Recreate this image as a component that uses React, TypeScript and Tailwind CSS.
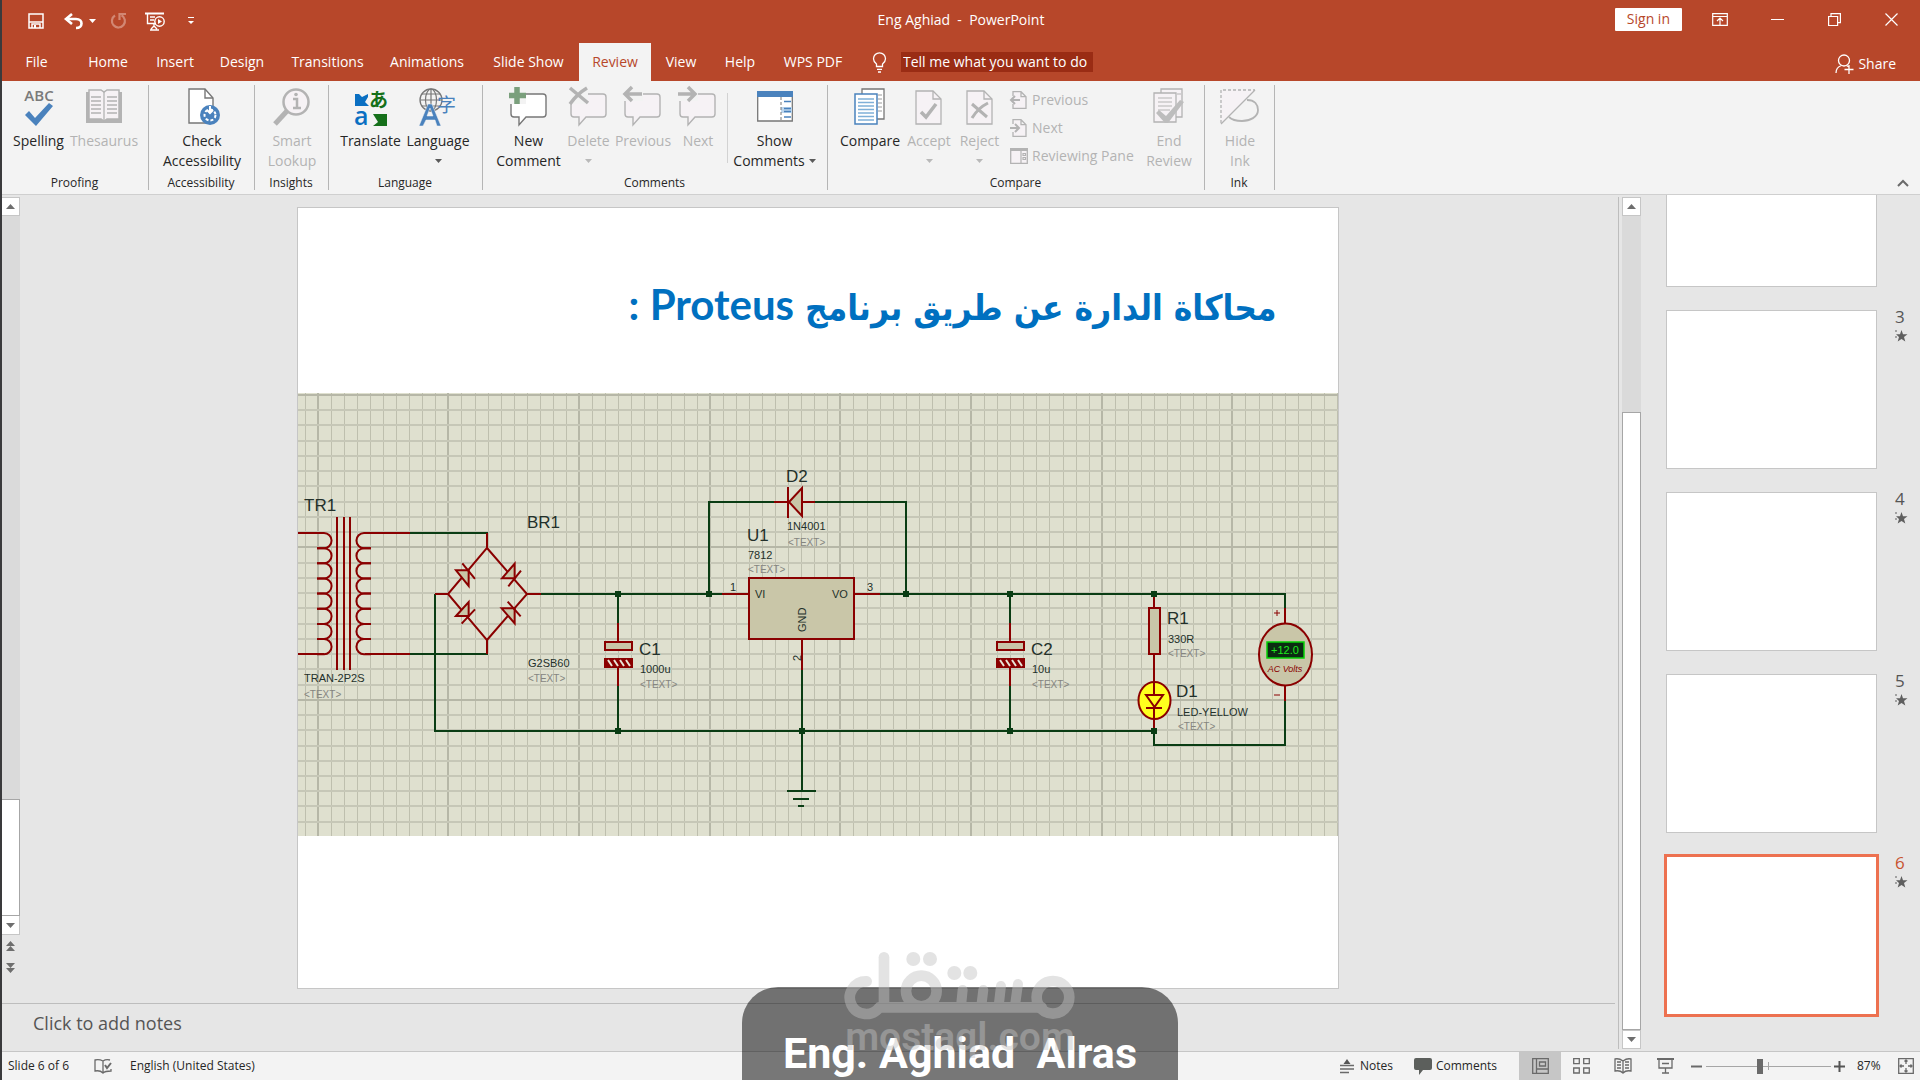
import React from "react";

/* ---------- shared bits ---------- */

type P = { children?: React.ReactNode };

function Svg({ w, h, label, children }: P & { w: number; h: number; label?: string }) {
  return (
    <svg width={w} height={h} viewBox={`0 0 ${w} ${h}`} fill="none" aria-hidden={!label} aria-label={label} className="shrink-0 overflow-visible">
      {children}
    </svg>
  );
}

function Caret({ dim }: { dim?: boolean }) {
  return (
    <Svg w={7} h={4}>
      <path d="M0 0h7L3.5 4z" fill={dim ? "#b9b9b9" : "#5a5a5a"} />
    </Svg>
  );
}

/* ---------- title bar ---------- */

function TitleBar() {
  return (
    <div className="grid h-[43px] grid-cols-3 items-start pt-[3px] text-sm text-white">
      <div className="flex h-9 items-center pl-[26px]">
        <button aria-label="Save" className="mr-[20px]">
          <Svg w={16} h={16}>
            <path d="M1 1h14v14H1z" stroke="#fff" strokeWidth="1.5" />
            <path d="M1 9h14" stroke="#fff" strokeWidth="1.5" />
            <path d="M4 15v-4h8v4" stroke="#fff" strokeWidth="1.5" />
            <path d="M6 12h2v3H6z" fill="#fff" />
          </Svg>
        </button>
        <button aria-label="Undo" className="mr-[5px]">
          <Svg w={20} h={16}>
            <path d="M8 1 2 6l6 5" stroke="#fff" strokeWidth="2.6" />
            <path d="M2 6h10c4 0 5.500 2.500 5.500 4.500S16 15 12 15" stroke="#fff" strokeWidth="2.600" />
          </Svg>
        </button>
        <button aria-label="Undo options" className="mr-[13px]">
          <Svg w={7} h={4}>
            <path d="M0 0h7L3.500 4z" fill="#fff" />
          </Svg>
        </button>
        <button aria-label="Repeat" className="mr-[18px]">
          <Svg w={18} h={18}>
            <path d="M6 3.500A6.500 6.500 0 1 0 12.500 3.300" stroke="#d28773" strokeWidth="2.200" />
            <path d="M10.500 8V2H17" stroke="#d28773" strokeWidth="2.200" />
          </Svg>
        </button>
        <button aria-label="Start from beginning" className="mr-[23px]">
          <Svg w={20} h={19}>
            <path d="M0 1.500h19" stroke="#fff" strokeWidth="2" />
            <path d="M2.500 2v9.500H11M5 5h5M5 8h4M9 12v3M5 18h9M6 17l3-3 3 3" stroke="#fff" strokeWidth="1.400" />
            <circle cx="14.500" cy="9.500" r="4.700" stroke="#fff" strokeWidth="1.400" />
            <path d="M13 7l4 2.500-4 2.500z" fill="#fff" />
          </Svg>
        </button>
        <button aria-label="Customize Quick Access Toolbar">
          <Svg w={7} h={8}>
            <path d="M0 .5h6" stroke="#fff" />
            <path d="M0 4h6L3 7z" fill="#fff" />
          </Svg>
        </button>
      </div>
      <h1 className="flex h-[34px] items-center justify-center whitespace-pre">{"Eng Aghiad  -  PowerPoint"}</h1>
      <div className="flex h-8 items-center justify-end pr-[22px]">
        <button className="mr-[30px] h-[23px] rounded-[1px] bg-white px-[12px] leading-5 text-[#b7472a]">Sign in</button>
        <button aria-label="Ribbon display options" className="mr-[43px]">
          <Svg w={16} h={13}>
            <path d="M.7.700h14.600v11.600H.7zM.7 3.500h14.600M8 12V5.500M5 8l3-3 3 3" stroke="#fff" strokeWidth="1.200" />
          </Svg>
        </button>
        <button aria-label="Minimize" className="mr-[44px]">
          <Svg w={13} h={13}>
            <path d="M0 6.500h13" stroke="#fff" />
          </Svg>
        </button>
        <button aria-label="Restore" className="mr-[44px]">
          <Svg w={13} h={13}>
            <path d="M.6 3.500h9v9h-9zM3 3.500V.600h9.400v9H10" stroke="#fff" strokeWidth="1.200" />
          </Svg>
        </button>
        <button aria-label="Close">
          <Svg w={13} h={13}>
            <path d="M.5.500l12 12M12.500.500l-12 12" stroke="#fff" strokeWidth="1.200" />
          </Svg>
        </button>
      </div>
    </div>
  );
}

const TABS: { name: string; width: string }[] = [
  { name: "File", width: "w-[69px]" },
  { name: "Home", width: "w-[74px]" },
  { name: "Insert", width: "w-[60px]" },
  { name: "Design", width: "w-[74px]" },
  { name: "Transitions", width: "w-[97px]" },
  { name: "Animations", width: "w-[102px]" },
  { name: "Slide Show", width: "w-[101px]" },
  { name: "Review", width: "w-[72px]" },
  { name: "View", width: "w-[60px]" },
  { name: "Help", width: "w-[58px]" },
  { name: "WPS PDF", width: "w-[88px]" },
];

function TabStrip() {
  return (
    <nav className="flex h-[38px] items-stretch text-sm text-white">
      {TABS.map((t) => (
        <button
          key={t.name}
          className={`${t.width} shrink-0 whitespace-nowrap text-center ${t.name === "Review" ? "bg-[#f3f3f3] text-[#b7472a]" : ""}`}
        >
          {t.name}
        </button>
      ))}
      <label className="ml-[15px] flex items-center gap-[14px]">
        <Svg w={15} h={21} label="Tell me">
          <path d="M4.500 14.500v-2.500C2.500 10.500 1.500 9 1.500 6.800a6 6 0 0 1 12 0c0 2.200-1 3.700-3 5.200v2.500zM5 17.300h5M6 20h3" stroke="#fff" strokeWidth="1.300" />
        </Svg>
        <input
          placeholder="Tell me what you want to do"
          className="h-5 w-[192px] bg-[#9a2c14] pl-[2px] text-sm text-white placeholder-white outline-none placeholder:opacity-100"
        />
      </label>
      <button className="ml-auto flex items-center gap-1 pr-[24px] pt-[3px]">
        <Svg w={19} h={20}>
          <circle cx="9" cy="6.500" r="5.500" stroke="#fff" strokeWidth="1.300" />
          <path d="M1 19c0-4 2-6.500 5.500-7.500M11.500 11.500l2 1.200M14 11v9M9.500 15.500h9" stroke="#fff" strokeWidth="1.300" />
        </Svg>
        Share
      </button>
    </nav>
  );
}

/* ---------- ribbon icons ---------- */

const G = "#b3b3b3";
const PALE = "#f6f2f5";
const BUBBLE = "M7 7h27q3 0 3 3v17q0 3-3 3H17l-7 8v-8H5q-3 0-3-3V10q0-3 3-3z";

const icons = {
  spelling: (
    <Svg w={34} h={40}>
      <text x="17" y="14" textAnchor="middle" fontSize="15" fontWeight="600" fill="#7a7a7a" fontFamily="Open Sans, sans-serif">ABC</text>
      <path d="M3 28l4-4 6 7L27 16l4 3-17 20z" fill="#4a82bd" />
    </Svg>
  ),
  thesaurus: (
    <Svg w={38} h={36}>
      <path d="M1 3h36v31H1z" fill={G} />
      <path d="M4 1h12l3 2 3-2h12v29H22l-3 2-3-2H4z" fill={PALE} stroke={G} strokeWidth="1.500" />
      <path d="M19 3v28M6 8h10M6 12h10M6 16h10M6 20h10M6 24h10M22 8h10M22 12h10M22 16h10M22 20h10M22 24h10" stroke={G} strokeWidth="1.300" />
    </Svg>
  ),
  check: (
    <Svg w={26} h={38}>
      <path d="M0 1h16l8 9v25H0z" fill="#fff" stroke="#777" strokeWidth="1.400" />
      <path d="M16 1v9h8" stroke="#777" strokeWidth="1.400" />
      <circle cx="21" cy="27" r="10" fill="#4a82bd" />
      <circle cx="21" cy="27" r="5.500" stroke="#fff" strokeWidth="2" strokeDasharray="3 2" />
      <path d="M21 18v7M18 22l3 3 3-3" stroke="#fff" strokeWidth="2" />
    </Svg>
  ),
  lookup: (
    <Svg w={38} h={38}>
      <path d="M2 36l12-13" stroke={G} strokeWidth="5" />
      <circle cx="23" cy="14" r="12.500" fill={PALE} stroke={G} strokeWidth="2.500" />
      <path d="M20 11h4v9M20 20h8" stroke={G} strokeWidth="2.500" />
      <circle cx="23" cy="6.500" r="1.800" fill={G} />
    </Svg>
  ),
  translate: (
    <Svg w={36} h={38}>
      <path d="M2 6h4l3 3 6-3v3l-3 5 4 4H2z" fill="#0a6fc2" />
      <text x="1" y="37" fontSize="25" fill="#0a6fc2" fontFamily="Open Sans, sans-serif" fontWeight="600">a</text>
      <text x="16" y="19" fontSize="19" fill="#15701a" fontFamily="Noto Sans CJK JP, sans-serif" fontWeight="700">あ</text>
      <path d="M20 26h14v12H20l5-4z" fill="#15701a" />
    </Svg>
  ),
  language: (
    <Svg w={38} h={38}>
      <circle cx="12" cy="12" r="11" stroke="#777" strokeWidth="1.300" />
      <path d="M1 12h22M3 6h18M3 18h18M12 1v22" stroke="#777" strokeWidth="1.200" />
      <ellipse cx="12" cy="12" rx="5.500" ry="11" stroke="#777" strokeWidth="1.200" />
      <path d="M0 38 9 16h4l9 22h-4l-2-6H7l-3 6zM8 28h6l-3-8z" fill="#4a82bd" stroke="#f3f3f3" strokeWidth=".5" />
      <text x="18" y="24" fontSize="19" fill="#4a82bd" fontFamily="Noto Sans CJK SC, sans-serif">字</text>
    </Svg>
  ),
  newComment: (
    <Svg w={40} h={40}>
      <path d={BUBBLE} fill="#fff" stroke="#777" strokeWidth="1.400" />
      <path d="M-1 -1h18v18H-1z" fill="#f3f3f3" />
      <path d="M8 0v17M0 8.500h17" stroke="#7a9f7c" strokeWidth="5.500" />
    </Svg>
  ),
  deleteComment: (
    <Svg w={40} h={40}>
      <path d={BUBBLE} fill={PALE} stroke={G} strokeWidth="1.400" />
      <path d="M0 0h19v17H0z" fill="#f3f3f3" />
      <path d="M1 1l18 15M18 1Q8 7 1 17" stroke={G} strokeWidth="3.500" />
    </Svg>
  ),
  prevComment: (
    <Svg w={40} h={40}>
      <path d={BUBBLE} fill={PALE} stroke={G} strokeWidth="1.400" />
      <path d="M0 0h20v14H0z" fill="#f3f3f3" />
      <path d="M2 7h17M9 0L2 7l7 7" stroke={G} strokeWidth="3.500" />
    </Svg>
  ),
  nextComment: (
    <Svg w={40} h={40}>
      <path d={BUBBLE} fill={PALE} stroke={G} strokeWidth="1.400" />
      <path d="M0 0h20v14H0z" fill="#f3f3f3" />
      <path d="M0 7h17M10 0l7 7-7 7" stroke={G} strokeWidth="3.500" />
    </Svg>
  ),
  showComments: (
    <Svg w={36} h={36}>
      <path d="M.7 3h34.600v29H.7z" fill="#fff" stroke="#777" strokeWidth="1.300" />
      <path d="M0 2h36v6H0z" fill="#4a82bd" />
      <path d="M24 18h11v6H24z" fill="#bcd6ee" />
      <path d="M24 8v25" stroke="#777" strokeDasharray="3 2" />
      <path d="M27 12.500h7M27 19.500h7M27 22.500h7M27 28h7" stroke="#4a82bd" strokeWidth="1.300" />
    </Svg>
  ),
  compare: (
    <Svg w={32} h={38}>
      <path d="M8 1h22v30H8z" fill="#fff" stroke="#777" strokeWidth="1.300" />
      <path d="M24 7h4M24 11h4M24 15h4M24 19h4M24 23h4" stroke="#999" />
      <path d="M1 6h22v30H1z" fill="#fff" stroke="#4a82bd" strokeWidth="1.500" />
      <path d="M4 11h16M4 14.500h16M4 18h16M4 21.500h16M4 25h16M4 28.500h16M4 32h16" stroke="#7fb0d8" strokeWidth="1.300" />
    </Svg>
  ),
  accept: (
    <Svg w={28} h={36}>
      <path d="M1 2h17l8 8v25H1z" fill={PALE} stroke={G} strokeWidth="1.300" />
      <path d="M18 2v8h8" stroke={G} strokeWidth="1.300" />
      <path d="M6 23l5 5L21 15" stroke={G} strokeWidth="3.500" />
    </Svg>
  ),
  reject: (
    <Svg w={28} h={36}>
      <path d="M1 2h17l8 8v25H1z" fill={PALE} stroke={G} strokeWidth="1.300" />
      <path d="M18 2v8h8" stroke={G} strokeWidth="1.300" />
      <path d="M6 15l15 13M22 14Q12 19 6 29" stroke={G} strokeWidth="3" />
    </Svg>
  ),
  endReview: (
    <Svg w={32} h={38}>
      <path d="M8 1h21v28H8z" fill={PALE} stroke={G} strokeWidth="1.300" />
      <path d="M24 6h4" stroke={G} />
      <path d="M1 5h22v29H1z" fill={PALE} stroke={G} strokeWidth="1.300" />
      <path d="M5 10h14M5 14h14M5 18h14M5 22h12" stroke={G} strokeWidth="1.200" />
      <path d="M3 25l3-3 7 6L27 12l4 2-16 21h-3z" fill="#bdbdbd" />
    </Svg>
  ),
  hideInk: (
    <Svg w={40} h={36}>
      <path d="M1 1h34L1 34z" fill={PALE} />
      <path d="M1 34V1h34" stroke={G} strokeWidth="1.300" strokeDasharray="3 2" />
      <path d="M1 35 35 1" stroke={G} strokeWidth="1.300" />
      <path d="M27 11c8 0 11 5 11 10 0 7-8 11-16 11-7 0-11-2-13-4" stroke={G} strokeWidth="1.800" />
    </Svg>
  ),
};

/* ---------- ribbon ---------- */

function Big({ icon, lines, width, dim, drop }: { icon: React.ReactNode; lines: string[]; width: string; dim?: boolean; drop?: "below" | "inline" }) {
  return (
    <button className={`${width} flex shrink-0 flex-col items-center leading-5 ${dim ? "text-[#b3b3b3]" : "text-[#262626]"}`}>
      <span className="mb-1 flex h-10 items-center justify-center">{icon}</span>
      <span className="whitespace-nowrap">{lines[0]}</span>
      {lines[1] && (
        <span className="flex items-center gap-1 whitespace-nowrap">
          {lines[1]}
          {drop === "inline" && <Caret dim={dim} />}
        </span>
      )}
      {drop === "below" && (
        <span className="flex h-5 items-center">
          <Caret dim={dim} />
        </span>
      )}
    </button>
  );
}

function Group({ name, width, pad = "", children }: P & { name: string; width: string; pad?: string }) {
  return (
    <section aria-label={name} className={`${width} relative flex shrink-0 flex-col`}>
      <div className={`flex h-[93px] justify-center pt-[6px] ${pad}`}>{children}</div>
      <h2 className="pr-[2px] text-center text-xs leading-[22px]">{name}</h2>
      <span className="absolute right-0 top-1 h-[105px] w-px bg-[#b5b5b5]" />
    </section>
  );
}

function SmallRow({ icon, label }: { icon: React.ReactNode; label: string }) {
  return (
    <button className="flex h-7 items-center gap-1 whitespace-nowrap">
      {icon}
      {label}
    </button>
  );
}

function Ribbon() {
  return (
    <div className="flex h-[114px] shrink-0 border-b border-[#cfcfcf] bg-[#f3f3f3] text-sm text-[#262626]">
      <Group name="Proofing" width="w-[147px]" pad="pr-[8px]">
        <Big icon={icons.spelling} lines={["Spelling"]} width="w-[65px]" />
        <Big icon={icons.thesaurus} lines={["Thesaurus"]} width="w-[66px]" dim />
      </Group>
      <Group name="Accessibility" width="w-[106px]">
        <Big icon={icons.check} lines={["Check", "Accessibility"]} width="w-[90px]" />
      </Group>
      <Group name="Insights" width="w-[74px]">
        <Big icon={icons.lookup} lines={["Smart", "Lookup"]} width="w-[60px]" dim />
      </Group>
      <Group name="Language" width="w-[154px]" pad="pr-[2px]">
        <Big icon={icons.translate} lines={["Translate"]} width="w-[66px]" />
        <Big icon={icons.language} lines={["Language"]} width="w-[69px]" drop="below" />
      </Group>
      <Group name="Comments" width="w-[345px]" pad="pr-[5px]">
        <Big icon={icons.newComment} lines={["New", "Comment"]} width="w-[76px]" />
        <Big icon={icons.deleteComment} lines={["Delete"]} width="w-[44px]" dim drop="below" />
        <Big icon={icons.prevComment} lines={["Previous"]} width="w-[65px]" dim />
        <Big icon={icons.nextComment} lines={["Next"]} width="w-[45px]" dim />
        <span className="mx-[6px] mt-[6px] h-[70px] w-px bg-[#d2d2d2]" />
        <Big icon={icons.showComments} lines={["Show", "Comments"]} width="w-[82px]" drop="inline" />
      </Group>
      <Group name="Compare" width="w-[377px]" pad="pl-[2px]">
        <Big icon={icons.compare} lines={["Compare"]} width="w-[68px]" />
        <Big icon={icons.accept} lines={["Accept"]} width="w-[50px]" dim drop="below" />
        <Big icon={icons.reject} lines={["Reject"]} width="w-[51px]" dim drop="below" />
        <div className="-mt-px w-[134px] pl-[5px] text-[#b3b3b3]">
          <SmallRow
            label="Previous"
            icon={
              <Svg w={18} h={18}>
                <path d="M3 5V.700h8l5 5V17.300H3V13M11 .7v5h5" fill={PALE} stroke={G} strokeWidth="1.300" />
                <path d="M1 9h9M5 5L1 9l4 4" stroke={G} strokeWidth="2" />
              </Svg>
            }
          />
          <SmallRow
            label="Next"
            icon={
              <Svg w={18} h={18}>
                <path d="M3 5V.700h8l5 5V17.300H3V13M11 .7v5h5" fill={PALE} stroke={G} strokeWidth="1.300" />
                <path d="M0 9h9M5 5l4 4-4 4" stroke={G} strokeWidth="2" />
              </Svg>
            }
          />
          <SmallRow
            label="Reviewing Pane"
            icon={
              <Svg w={18} h={18}>
                <path d="M.7 1.700h16.600v14.600H.7z" fill={PALE} stroke={G} strokeWidth="1.300" />
                <path d="M0 1h18v3H0z" fill={G} />
                <path d="M11 4v12M13 6.500h2.500v2H13zM13 10.500h2.500v2H13z" stroke={G} strokeWidth="1.200" />
              </Svg>
            }
          />
        </div>
        <Big icon={icons.endReview} lines={["End", "Review"]} width="w-[60px]" dim />
      </Group>
      <Group name="Ink" width="w-[70px]">
        <Big icon={icons.hideInk} lines={["Hide", "Ink"]} width="w-[50px]" dim />
      </Group>
      <button aria-label="Collapse the ribbon" className="ml-auto mr-[11px] self-end pb-[7px]">
        <Svg w={12} h={8}>
          <path d="M1 7l5-5 5 5" stroke="#6a6a6a" strokeWidth="2" />
        </Svg>
      </button>
    </div>
  );
}

/* ---------- circuit drawing ---------- */

const RED = "#8a0000";
const WIRE = "#0a3d14";
const INK = "#23302a";
const FILL = "#c9c6a8";

function Note({ x, y, children }: P & { x: number; y: number }) {
  return <text x={x} y={y} fontSize="10" fill="#85857f">{children}</text>;
}
function Val({ x, y, children }: P & { x: number; y: number }) {
  return <text x={x} y={y} fontSize="11" fill={INK}>{children}</text>;
}
function Ref({ x, y, children }: P & { x: number; y: number }) {
  return <text x={x} y={y} fontSize="17" fill={INK}>{children}</text>;
}
function Node({ x, y }: { x: number; y: number }) {
  return <rect x={x - 3} y={y - 3} width="6" height="6" fill={WIRE} />;
}

function Capacitor({ x }: { x: number }) {
  return (
    <g>
      <path d={`M${x} 594V623M${x} 686V731`} stroke={WIRE} strokeWidth="2" />
      <path d={`M${x} 623V641M${x} 667V686`} stroke={RED} strokeWidth="2" />
      <rect x={x - 13} y="642" width="27" height="8" fill={FILL} stroke={RED} strokeWidth="2" />
      <rect x={x - 13} y="659" width="27" height="8" fill={RED} stroke={RED} strokeWidth="2" />
      <path d={`M${x - 10} 660l4 6M${x - 4} 660l4 6M${x + 2} 660l4 6M${x + 8} 660l4 6`} stroke="#e8e6d8" strokeWidth="2" />
      <Node x={x} y={594} />
      <Node x={x} y={731} />
    </g>
  );
}

function Circuit() {
  const vs: number[] = [];
  for (let i = -1; i < 79; i++) vs.push(i);
  const hs: number[] = [];
  for (let i = 0; i < 29; i++) hs.push(i);
  const coils = [0, 1, 2, 3, 4, 5, 6, 7];
  return (
    <svg viewBox="298 393 1040 443" className="block w-full shrink-0" fill="none" fontFamily="Liberation Sans, Arial, sans-serif" role="img" aria-label="Power supply circuit">
      <rect x="298" y="393" width="1040" height="443" fill="#dfe0cf" />
      {vs.map((i) => {
        const x = Math.round(317.7 + i * 13.067);
        const bold = i % 10 === 0;
        return <rect key={i} x={x - (bold ? 1 : 0)} y="393" width={bold ? 2 : 1} height="443" fill={bold ? "#b6b7a7" : "#bebfae"} />;
      })}
      {hs.map((i) => {
        const y = Math.round(395 + i * 15.24);
        const bold = i % 10 === 0;
        return <rect key={i} x="298" y={y - 1} width="1040" height="2" fill={bold ? "#b6b7a7" : "#c6c7b7"} />;
      })}

      {/* wires */}
      <g stroke={WIRE} strokeWidth="2">
        <path d="M409 533h79M409 654h79" />
        <path d="M435 594v137h719v14h131v-44" />
        <path d="M541 594h181M709 594v-92h65M815 502h91v92M880 594h405v14" />
        <path d="M802 669v122" />
        <path d="M787 791h29M793 799h16M798 806h6" />
      </g>

      {/* transformer */}
      <g stroke={RED} strokeWidth="2">
        <path d="M298 533h20M298 654h26M371 533h39M365 654h45M337 517v153M344 517v153M350 517v153" />
        {coils.map((i) => {
          const y = 533 + i * 15.15;
          return (
            <g key={i}>
              <path d={`M317 ${y}h7a7.500 7.500 0 0 1 0 15.150h-7`} />
              <path d={`M371 ${y}h-7a7.500 7.500 0 0 0 0 15.150h7`} />
            </g>
          );
        })}
      </g>

      {/* bridge rectifier */}
      <g stroke={RED} strokeWidth="2">
        <path d="M487 533v15l-39 46 39 46v14M487 548l40 46-40 46M435 594h13M527 594h14" />
      </g>
      <g transform="translate(290 450) scale(.3333)" stroke={RED} strokeWidth="6">
        <path d="M498 361h38v47zM636 385l38-44v44zM498 498l38-42v42zM635 475h39v45z" fill={FILL} />
        <path d="M517 340l38 47M655 409l38-47M515 521l40-43M653 455l39 44" />
      </g>

      <Capacitor x={618} />
      <Capacitor x={1010} />

      {/* diode D2 */}
      <g stroke={RED} strokeWidth="2">
        <path d="M774 502h14M802 502h13M788 487v31" />
        <path d="M802 488v28l-13-14z" fill={FILL} />
      </g>

      {/* regulator */}
      <g stroke={RED} strokeWidth="2">
        <path d="M722 594h27M854 594h26M802 639v31" />
        <rect x="749" y="578" width="105" height="61" fill={FILL} />
      </g>

      {/* resistor, LED */}
      <g stroke={RED} strokeWidth="2">
        <path d="M1154 597v11M1154 654v75" />
        <rect x="1149" y="608" width="11" height="46" fill={FILL} />
        <ellipse cx="1154.500" cy="700.500" rx="16" ry="18.500" fill="#ffff1e" />
        <path d="M1154 682v13M1154 708v12M1146 695h17l-8.500 12zM1146 708h16" />
      </g>
      <Node x={709} y={594} />
      <Node x={906} y={594} />
      <Node x={802} y={731} />
      <Node x={1154} y={594} />
      <Node x={1154} y={731} />

      {/* voltmeter */}
      <g stroke={RED} strokeWidth="2">
        <path d="M1285 608v15M1285 686v15" />
        <path d="M1274 613h6M1277 610v6M1274 695h6" strokeWidth="1" />
        <ellipse cx="1285.500" cy="654.500" rx="26.500" ry="31" fill={FILL} />
      </g>
      <rect x="1267" y="642" width="37" height="16" fill="#0b2c12" stroke="#06d406" strokeWidth="1.500" />
      <text x="1285" y="654" fontSize="11" fill="#1ee81e" textAnchor="middle">+12.0</text>
      <text x="1285" y="672" fontSize="9" fontStyle="italic" fill={RED} textAnchor="middle">AC Volts</text>

      {/* labels */}
      <Ref x={304} y={511}>TR1</Ref>
      <Val x={304} y={682}>TRAN-2P2S</Val>
      <Note x={304} y={698}>{"<TEXT>"}</Note>
      <Ref x={527} y={528}>BR1</Ref>
      <Val x={528} y={667}>G2SB60</Val>
      <Note x={528} y={682}>{"<TEXT>"}</Note>
      <Ref x={639} y={655}>C1</Ref>
      <Val x={640} y={673}>1000u</Val>
      <Note x={640} y={688}>{"<TEXT>"}</Note>
      <Ref x={786} y={482}>D2</Ref>
      <Val x={787} y={530}>1N4001</Val>
      <Note x={788} y={546}>{"<TEXT>"}</Note>
      <Ref x={747} y={541}>U1</Ref>
      <Val x={748} y={559}>7812</Val>
      <Note x={748} y={573}>{"<TEXT>"}</Note>
      <Val x={730} y={591}>1</Val>
      <Val x={867} y={591}>3</Val>
      <Val x={755} y={598}>VI</Val>
      <Val x={832} y={598}>VO</Val>
      <text transform="translate(806 632) rotate(-90)" fontSize="11" fill={INK}>GND</text>
      <text transform="translate(801 661) rotate(-90)" fontSize="11" fill={INK}>2</text>
      <Ref x={1031} y={655}>C2</Ref>
      <Val x={1032} y={673}>10u</Val>
      <Note x={1032} y={688}>{"<TEXT>"}</Note>
      <Ref x={1167} y={624}>R1</Ref>
      <Val x={1168} y={643}>330R</Val>
      <Note x={1168} y={657}>{"<TEXT>"}</Note>
      <Ref x={1176} y={697}>D1</Ref>
      <Val x={1177} y={716}>LED-YELLOW</Val>
      <Note x={1178} y={730}>{"<TEXT>"}</Note>
    </svg>
  );
}

/* ---------- workspace ---------- */

function ArrowBtn({ dir, label, side }: { dir: "up" | "down"; label: string; side: string }) {
  return (
    <button aria-label={label} className={`${side} flex h-[19px] w-full shrink-0 items-center justify-center border-[#c6c6c6] bg-white`}>
      <Svg w={9} h={5}>
        <path d={dir === "up" ? "M0 5h9L4.500 0z" : "M0 0h9L4.500 5z"} fill="#6e6e6e" />
      </Svg>
    </button>
  );
}

function SlideArea() {
  return (
    <div className="flex min-h-0 flex-1">
      <div className="flex w-[18px] shrink-0 flex-col pt-[2px]">
        <ArrowBtn dir="up" label="Scroll up" side="border-y border-r" />
        <div className="w-full flex-1 bg-[#dadada]" />
        <div className="h-[117px] w-full border-y border-r border-[#a6a6a6] bg-white" />
        <ArrowBtn dir="down" label="Scroll down" side="border-b border-r" />
        <button aria-label="Previous slide" className="ml-1 mt-[6px]">
          <Svg w={9} h={10}>
            <path d="M0 5h9L4.500 0zM0 10h9L4.500 5z" fill="#6e6e6e" />
          </Svg>
        </button>
        <button aria-label="Next slide" className="mb-[30px] ml-1 mt-[12px]">
          <Svg w={9} h={10}>
            <path d="M0 0h9L4.500 5zM0 5h9L4.500 10z" fill="#6e6e6e" />
          </Svg>
        </button>
      </div>
      <div className="flex min-w-0 flex-1 justify-center pb-[14px] pt-3">
        <article className="flex aspect-[1042/782] h-full flex-col overflow-hidden border border-[#c6c6c6] bg-white">
          <div className="min-h-0 flex-[185]">
            <h2 dir="rtl" lang="ar" className="whitespace-nowrap pr-[61px] pt-[66px] font-['DejaVu_Sans_Condensed','DejaVu_Sans',sans-serif] text-[35px] font-bold leading-[60px] text-[#0070c0]">
              محاكاة الدارة عن طريق برنامج <span className="font-['Lato',sans-serif] text-[42px]">Proteus :</span>
            </h2>
          </div>
          <Circuit />
          <div className="min-h-0 flex-[152]" />
        </article>
      </div>
    </div>
  );
}

function Thumb({ n, selected }: { n?: number; selected?: boolean }) {
  return (
    <li className="flex shrink-0">
      <button
        aria-label={n ? `Slide ${n}` : "Slide"}
        className={`h-[159px] w-[211px] shrink-0 border bg-white ${selected ? "border-[#ed7150] ring-2 ring-[#ed7150]" : "border-[#c6c6c6]"}`}
      />
      {n && (
        <span className={`ml-[18px] flex flex-col text-[17px] leading-[14px] ${selected ? "text-[#c8532f]" : "text-[#555]"}`}>
          {n}
          <svg width="13" height="12" viewBox="0 0 13 12" className="mt-[6px] overflow-visible" aria-hidden>
            <path d="M6.500 0l1.500 4.200H12.500L9 7l1.300 4.500L6.500 9l-3.800 2.500L4 7 1 4.200h4z" fill="#5f5f5f" />
            <path d="M0 1h2M0 7h2" stroke="#5f5f5f" />
          </svg>
        </span>
      )}
    </li>
  );
}

function ThumbPane() {
  return (
    <aside className="flex w-[302px] shrink-0">
      <div className="mb-[2px] mt-[2px] w-px bg-[#bdbdbd]" />
      <div className="mb-[2px] ml-[3px] mt-[2px] flex w-[19px] flex-col">
        <ArrowBtn dir="up" label="Scroll thumbnails up" side="border" />
        <div className="w-full flex-[196] bg-[#dadada]" />
        <div className="w-full flex-[617] border border-[#a6a6a6] bg-white" />
        <ArrowBtn dir="down" label="Scroll thumbnails down" side="border" />
      </div>
      <ol className="ml-[25px] flex flex-1 flex-col justify-end gap-[23px] overflow-visible pb-[36px]">
        <Thumb />
        <Thumb n={3} />
        <Thumb n={4} />
        <Thumb n={5} />
        <Thumb n={6} selected />
      </ol>
    </aside>
  );
}

/* ---------- status bar ---------- */

function StatusBar() {
  const s = { stroke: "#6a6a6a", strokeWidth: 1.3 };
  return (
    <footer className="flex h-[29px] shrink-0 items-stretch border-t border-[#c6c6c6] bg-[#f3f3f3] text-[12px] text-[#262626]">
      <div className="flex items-center pl-[6px]">
        <span className="w-[86px]">Slide 6 of 6</span>
        <button aria-label="Spell check" className="mr-[18px]">
          <Svg w={18} h={16}>
            <path d="M9 3Q5 1 1 2v11q5-1 8 2 2-2 8-2v-2M9 3v12M9 3q3-2 7-1" {...s} />
            <path d="M11 7l2 3 4-5" stroke="#6a6a6a" strokeWidth="2" />
          </Svg>
        </button>
        <button>English (United States)</button>
      </div>
      <div className="ml-auto flex items-stretch">
        <button className="mr-[21px] flex items-center gap-[6px]">
          <Svg w={14} h={16}>
            <path d="M7 1l3.500 5h-7z" fill="#555" />
            <path d="M0 7.500h14M0 11h14M0 14.500h9" {...s} />
          </Svg>
          Notes
        </button>
        <button className="mr-[22px] flex items-center gap-[4px]">
          <Svg w={18} h={18}>
            <path d="M2 1h14q2 0 2 2v8q0 2-2 2H9l-4 5v-5H2q-2 0-2-2V3q0-2 2-2z" fill="#5c5f5c" />
          </Svg>
          Comments
        </button>
        <button aria-label="Normal view" className="flex w-[42px] items-center justify-center bg-[#c6c6c6]">
          <Svg w={17} h={16}>
            <path d="M.7.700h15.600v14.600H.7zM4.500 1v14M4.500 11h12M7.500 4h6v4h-6z" {...s} />
          </Svg>
        </button>
        <button aria-label="Slide sorter" className="flex w-[41px] items-center justify-center">
          <Svg w={17} h={16}>
            <path d="M.7.700h5.600v5H.7zM10.700.700h5.600v5h-5.600zM.7 10h5.600v5H.7zM10.700 10h5.600v5h-5.600z" {...s} />
          </Svg>
        </button>
        <button aria-label="Reading view" className="flex w-[42px] items-center justify-center">
          <Svg w={18} h={16}>
            <path d="M9 3Q5 0 1 1v12q5-1 8 2 3-3 8-2V1q-4-1-8 2zM9 3v12M3 4h4M3 7h4M3 10h4M11 4h4M11 7h4M11 10h4" {...s} />
          </Svg>
        </button>
        <button aria-label="Slide show" className="flex w-[42px] items-center justify-center">
          <Svg w={17} h={16}>
            <path d="M0 1h17" stroke="#6a6a6a" strokeWidth="2" />
            <path d="M2 2v8h13V2M5 5.500h7M8.500 10v5M5 15h7" {...s} />
          </Svg>
        </button>
        <button aria-label="Zoom out" className="ml-[5px] flex items-center">
          <Svg w={11} h={11}>
            <path d="M0 5.500h11" stroke="#6a6a6a" strokeWidth="2" />
          </Svg>
        </button>
        <div className="relative ml-[4px] mr-[3px] flex items-center">
          <span className="absolute left-[62px] h-2 w-px bg-[#a6a6a6]" />
          <input
            type="range"
            aria-label="Zoom"
            min={0}
            max={100}
            defaultValue={43}
            className="relative h-4 w-[125px] appearance-none bg-[linear-gradient(#a6a6a6,#a6a6a6)] bg-[length:100%_1px] bg-center bg-no-repeat [&::-webkit-slider-thumb]:h-[15px] [&::-webkit-slider-thumb]:w-[6px] [&::-webkit-slider-thumb]:appearance-none [&::-webkit-slider-thumb]:bg-[#6a6a6a]"
          />
        </div>
        <button aria-label="Zoom in" className="flex items-center">
          <Svg w={11} h={11}>
            <path d="M0 5.500h11M5.500 0v11" stroke="#555" strokeWidth="2" />
          </Svg>
        </button>
        <button className="ml-[12px] w-[41px] text-left">87%</button>
        <button aria-label="Fit slide to window" className="mr-[6px] flex items-center">
          <Svg w={16} h={16}>
            <path d="M.7.700h14.600v14.600H.7z" {...s} />
            <path d="M8 2v4M8 10v4M2 8h4M10 8h4M6.500 3.500L8 2l1.500 1.500M6.500 12.500L8 14l1.500-1.500M3.500 6.500L2 8l1.500 1.500M12.500 6.500L14 8l-1.500 1.500" {...s} />
          </Svg>
        </button>
      </div>
    </footer>
  );
}

/* ---------- floating name plate and watermark ---------- */

function NamePlate() {
  return (
    <div className="absolute bottom-0 left-1/2 flex h-[93px] w-[436px] -translate-x-1/2 justify-center rounded-t-[36px] bg-black/51">
      <p className="mt-[41px] whitespace-pre font-['Roboto',sans-serif] text-[43px] font-bold leading-[50px] text-white">{"Eng. Aghiad  Alras"}</p>
      <svg width="500" height="130" viewBox="0 0 500 130" className="absolute bottom-0 left-1/2 -translate-x-1/2 opacity-45" fill="none" aria-label="mostaql.com">
        <g transform="translate(10 -20) scale(.3333)" stroke="#c2c2c2" strokeWidth="32" strokeLinecap="round">
          <path d="M440 154a49 49 0 1 0 38 78H965" strokeLinejoin="round" />
          <path d="M492 82v140" />
          <circle cx="604" cy="183" r="46" />
          <circle cx="999" cy="202" r="49" />
          <path d="M728 180l-4 40M790 180l-5 40M843 168l-6 52M894 162l-8 58" strokeWidth="30" />
          <g fill="#c2c2c2" stroke="none">
            <circle cx="580" cy="87" r="21" />
            <circle cx="630" cy="87" r="21" />
            <circle cx="703" cy="129" r="21" />
            <circle cx="751" cy="129" r="21" />
          </g>
        </g>
        <text x="250" y="100" textAnchor="middle" fontSize="39" fontWeight="600" fill="#c2c2c2" fontFamily="Roboto, sans-serif">mostaql.com</text>
      </svg>
    </div>
  );
}

export default function App() {
  return (
    <div className="relative flex h-screen overflow-hidden bg-[#e6e6e6] font-['Open_Sans','Noto_Sans',sans-serif]">
      <div className="w-[2px] shrink-0 bg-[#3a3a3c]" />
      <div className="flex min-w-0 flex-1 flex-col">
        <header className="z-10 shrink-0">
          <div className="bg-[#b7472a]">
            <TitleBar />
            <TabStrip />
          </div>
          <Ribbon />
        </header>
        <div className="flex min-h-0 flex-1">
          <main className="mr-[3px] flex min-w-0 flex-1 flex-col">
            <SlideArea />
            <input
              aria-label="Notes"
              placeholder="Click to add notes"
              className="h-[48px] shrink-0 border-t border-[#bdbdbd] bg-transparent pb-[10px] pl-[31px] text-[18px] text-[#555] placeholder-[#555] outline-none"
            />
          </main>
          <ThumbPane />
        </div>
        <StatusBar />
      </div>
      <NamePlate />
    </div>
  );
}
